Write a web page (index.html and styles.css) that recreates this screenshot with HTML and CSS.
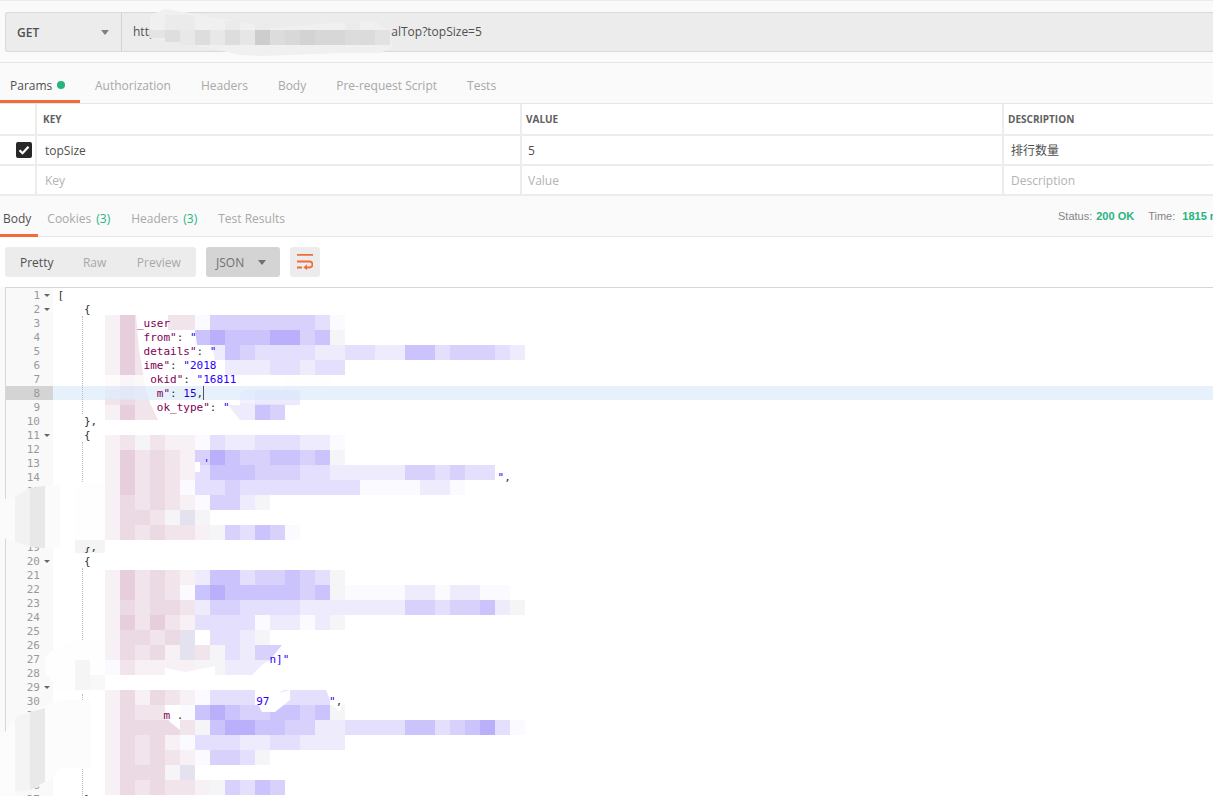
FILE: index.html
```html
<!DOCTYPE html>
<html lang="en">
<head>
<meta charset="utf-8">
<title>Postman request</title>
<link rel="stylesheet" href="styles.css">
</head>
<body>
<header class="request">
  <div class="reqbar">
    <div class="method"><span>GET</span><i class="caret"></i></div>
    <div class="url">http<span class="url-gap"></span>alTop?topSize=5</div>
  </div>
</header>
<nav class="tabs req-tabs">
  <a class="tab on">Params<i class="dot"></i></a>
  <a class="tab">Authorization</a>
  <a class="tab">Headers</a>
  <a class="tab">Body</a>
  <a class="tab">Pre-request Script</a>
  <a class="tab">Tests</a>
</nav>
<section class="params">
  <div class="prow head"><div class="c0"></div><div class="c1">KEY</div><div class="c2">VALUE</div><div class="c3">DESCRIPTION</div></div>
  <div class="prow"><div class="c0"><span class="check"><svg viewBox="0 0 16 16" width="16" height="16"><path d="M3.5 8.2l3 3 6-6.4" fill="none" stroke="#fff" stroke-width="2.2"/></svg></span></div><div class="c1">topSize</div><div class="c2">5</div><div class="c3 cjk">排行数量</div></div>
  <div class="prow ph"><div class="c0"></div><div class="c1">Key</div><div class="c2">Value</div><div class="c3">Description</div></div>
</section>
<nav class="tabs res-tabs">
  <a class="tab on">Body</a>
  <a class="tab">Cookies <b>(3)</b></a>
  <a class="tab">Headers <b>(3)</b></a>
  <a class="tab">Test Results</a>
  <div class="status">Status: <b>200 OK</b><span class="time">Time: <b>1815 ms</b></span></div>
</nav>
<div class="toolbar">
  <div class="modes"><span class="mode on">Pretty</span><span class="mode">Raw</span><span class="mode">Preview</span></div>
  <div class="lang"><span>JSON</span><i class="caret"></i></div>
  <div class="wrapbtn"><svg viewBox="0 0 16 16" width="16" height="16"><path d="M0 .9h16M0 7.500h12.500a3 3 0 0 1 0 6H8M0 13.500h5" fill="none" stroke="#f26b3a" stroke-width="1.8"/><path d="M10 10.300l-3.600 3.200 3.600 2.500z" fill="#f26b3a"/></svg></div>
</div>
<main class="editor">
<div class="guide g1"></div><div class="guide g2"></div><div class="guide g3"></div><div class="guide g4"></div>
<div class="lines">
<div class="ln"><span class="no fold">1</span><pre>[</pre></div>
<div class="ln"><span class="no fold">2</span><pre>    {</pre></div>
<div class="ln"><span class="no">3</span><pre>            <u>_user</u></pre></div>
<div class="ln"><span class="no">4</span><pre>             <u>from"</u>: <s>"</s></pre></div>
<div class="ln"><span class="no">5</span><pre>             <u>details"</u>: <s>"</s></pre></div>
<div class="ln"><span class="no">6</span><pre>             <u>ime"</u>: <s>"2018</s></pre></div>
<div class="ln"><span class="no">7</span><pre>              <u>okid"</u>: <s>"16811</s></pre></div>
<div class="ln active"><span class="no">8</span><pre>               <u>m"</u>: <em>15</em>,<i class="cursor"></i></pre></div>
<div class="ln"><span class="no">9</span><pre>               <u>ok_type"</u>: <s>"</s></pre></div>
<div class="ln"><span class="no">10</span><pre>    },</pre></div>
<div class="ln"><span class="no fold">11</span><pre>    {</pre></div>
<div class="ln"><span class="no">12</span><pre></pre></div>
<div class="ln"><span class="no">13</span><pre>                      <s>'</s></pre></div>
<div class="ln"><span class="no">14</span><pre>                                                                  <s class="nudge">"</s>,</pre></div>
<div class="ln"><span class="no">15</span><pre></pre></div>
<div class="ln"><span class="no">16</span><pre></pre></div>
<div class="ln"><span class="no">17</span><pre></pre></div>
<div class="ln"><span class="no">18</span><pre></pre></div>
<div class="ln"><span class="no">19</span><pre>    },</pre></div>
<div class="ln"><span class="no fold">20</span><pre>    {</pre></div>
<div class="ln"><span class="no">21</span><pre></pre></div>
<div class="ln"><span class="no">22</span><pre></pre></div>
<div class="ln"><span class="no">23</span><pre></pre></div>
<div class="ln"><span class="no">24</span><pre></pre></div>
<div class="ln"><span class="no">25</span><pre></pre></div>
<div class="ln"><span class="no">26</span><pre></pre></div>
<div class="ln"><span class="no">27</span><pre>                                <s>n]"</s></pre></div>
<div class="ln"><span class="no">28</span><pre></pre></div>
<div class="ln"><span class="no fold">29</span><pre></pre></div>
<div class="ln"><span class="no">30</span><pre>                              <s>97</s>         <s>"</s>,</pre></div>
<div class="ln"><span class="no">31</span><pre>                <u>m</u> .</pre></div>
<div class="ln"><span class="no">32</span><pre></pre></div>
<div class="ln"><span class="no">33</span><pre></pre></div>
<div class="ln"><span class="no">34</span><pre></pre></div>
<div class="ln"><span class="no">35</span><pre></pre></div>
<div class="ln"><span class="no">36</span><pre></pre></div>
<div class="ln"><span class="no">37</span><pre>    }</pre></div>
</div>
</main>
<div class="mosaic m1"></div>
<div class="mosaic m2"></div>
<div class="mosaic m3"></div>
<div class="mosaic m4"></div>
<svg class="canvas holes" viewBox="0 0 1213 796" width="1213" height="796">
  <path d="M136 315H168V330H195L197 345H212L216 365L224 373L234 380L250 386L233 400L228 405L240 420H158L151 405L146 390L139 350Z" fill="#fff"/>
  <path d="M98 375H345V386H98Z" fill="#fff" opacity=".72"/>
  <path d="M98 386H345V405H300L98 398Z" fill="#fff" opacity=".35"/>
  <path d="M345 375H560L300 400H345Z" fill="#fff" opacity=".8"/>
  <path d="M195 462H200V472H195Z" fill="#fff"/>
  <path d="M75 547H105V553H75Z" fill="#f4f4f4"/>
  <path d="M270 660L262 665L252 675H300V640H286Z" fill="#fff"/>
  <path d="M165 668L185 672L215 666V675H165Z" fill="#fff"/>
  <path d="M256 690H285L278 693L290 690V700L275 712L262 712L256 700Z" fill="#fff"/>
  <path d="M326 690H345L340 712L332 705Z" fill="#fff"/>
  <path d="M165 715H180V730L170 722Z" fill="#fff"/>
  <path d="M285 780H300V795H290Z" fill="#fff"/>
</svg>
<svg class="canvas smudges" viewBox="0 0 1213 796" width="1213" height="796">
  <path d="M150 15L165 9L190 13L250 24L272 28L320 24L375 21L390 32L392 48L380 53L340 53L262 56L240 55L200 46L150 38Z" fill="#f0f0f0"/>
  <g>
    <path d="M150 30h15v8h-15z" fill="#e4e4e4"/>
    <path d="M165 30h15v12h-15z" fill="#dedede"/>
    <path d="M180 30h15v15h-15z" fill="#e8e8e8"/>
    <path d="M195 30h15v15h-15z" fill="#dddddd"/>
    <path d="M210 30h15v15h-15z" fill="#e8e8e8"/>
    <path d="M225 30h15v15h-15z" fill="#dddddd"/>
    <path d="M240 30h15v15h-15z" fill="#e6e6e6"/>
    <path d="M255 30h15v15h-15z" fill="#cdcdcd"/>
    <path d="M270 30h15v15h-15z" fill="#dcdcdc"/>
    <path d="M285 30h15v15h-15z" fill="#d8d8d8"/>
    <path d="M300 30h15v15h-15z" fill="#d3d3d3"/>
    <path d="M315 30h30v15h-30z" fill="#d7d7d7"/>
    <path d="M345 30h15v15h-15z" fill="#dcdcdc"/>
    <path d="M360 30h15v15h-15z" fill="#dbdbdb"/>
    <path d="M375 30h15v15h-15z" fill="#e2e2e2"/>
    <path d="M165 15h30v15h-30z" fill="#ebebeb"/>
    <path d="M225 21h15v9h-15zM255 24h15v6h-15z" fill="#ebebeb"/>
    <path d="M345 22h15v8h-15z" fill="#ebebeb"/>
  </g>
  <path d="M0 500L15 497L30 488L60 485V548L30 547L15 542L0 537Z" fill="#fbfbfb"/>
  <path d="M15 497L30 488V547L15 542Z" fill="#f2f2f2"/>
  <path d="M30 488L45 486V548L30 547Z" fill="#e8e8e8"/>
  <path d="M75 483H105V540H75Z" fill="#fefefe"/>
  <path d="M75 540H105V547H75Z" fill="#f4f4f4"/>
  <path d="M45 658Q48 650 75 640H105V675H90V692H60L45 672Z" fill="#fefefe"/>
  <path d="M75 660H90V690H75Z" fill="#f5f5f5"/>
  <path d="M90 675H105V690H90Z" fill="#f8f8f8"/>
  <path d="M0 740L15 717L30 712L60 700H90V768H60L45 785L15 792V796H0Z" fill="#fcfcfc"/>
  <path d="M15 717L30 712V790L15 792Z" fill="#f4f4f4"/>
  <path d="M30 712L45 708V782L30 790Z" fill="#e9e9e9"/>
</svg>
<script src="mosaic.js"></script>
</body>
</html>
```
FILE: styles.css
```css
* { box-sizing: border-box; }
html, body { margin: 0; height: 796px; overflow: hidden; }
body {
  position: relative;
  display: flex;
  flex-direction: column;
  background: #fafafa;
  color: #505050;
  font: 12px "Open Sans", "Noto Sans CJK SC", sans-serif;
}
.request { height: 63px; border-top: 1px solid #ececec; border-bottom: 1px solid #e6e6e6; padding: 11px 0 0 5px; background: #fafafa; flex: none; }
.reqbar { display: flex; height: 40px; background: #ececec; border: 1px solid #d9d9d9; border-right: 0; border-radius: 3px 0 0 3px; }
.method { width: 116px; display: flex; align-items: center; justify-content: space-between; padding: 0 12px 0 11px; border-right: 1px solid #d4d4d4; font-weight: 600; color: #505050; }
.caret { display: block; width: 0; height: 0; border: 4px solid transparent; border-top: 5px solid #808080; border-bottom: 0; }
.url { flex: 1; display: flex; align-items: center; padding: 0 0 2px 11px; color: #505050; white-space: nowrap; }
.url-gap { width: 235px; }
.tabs { display: flex; align-items: stretch; flex: none; }
.req-tabs { height: 40px; }
.tab { display: flex; align-items: center; white-space: pre; color: #a8a8a8; padding: 7px 15px 0; border-bottom: 3px solid transparent; }
.tab.on { color: #505050; border-bottom-color: #f26b3a; }
.req-tabs .tab.on { width: 80px; padding: 7px 0 0 10px; }
.tab b { font-weight: 400; color: #26b47f; margin-left: 2px; }
.dot { width: 8px; height: 8px; border-radius: 50%; background: #26b47f; margin-left: 5px; }
.params { border-top: 1px solid #e6e6e6; background: #fff; flex: none; }
.prow { display: grid; grid-template-columns: 35px 485px 482px 1fr; height: 30px; border-bottom: 2px solid #ececec; color: #505050; }
.prow.head { height: 32px; font-size: 10px; font-weight: 700; color: #606060; }
.prow > div { display: flex; align-items: center; border-left: 2px solid #ececec; }
.prow > .c0 { border-left: 0; padding-left: 16px; }
.prow > .c1 { padding-left: 8px; }
.prow > .c2 { padding-left: 6px; }
.prow > .c3 { padding-left: 7px; }
.prow.head > .c1 { padding-left: 6px; }
.prow.head > .c2, .prow.head > .c3 { padding-left: 4px; }
.prow.ph { color: #b3b3b3; }
.check { display: block; width: 16px; height: 16px; background: #282828; border-radius: 2px; }
.check svg { display: block; }
.cjk { font-size: 12px; }
.res-tabs { height: 41px; border-bottom: 1px solid #e6e6e6; }
.res-tabs .tab { padding: 6px 10.500px 0; margin-bottom: -1px; }
.res-tabs .tab.on { padding: 6px 7px 0 3px; }
.res-tabs .tab:nth-child(2) { padding-left: 9px; }
.status { margin-left: auto; width: 155px; flex: none; align-self: center; margin-top: -1px; font: 11px "Liberation Sans", sans-serif; color: #858585; white-space: nowrap; overflow: hidden; display: flex; }
.status b { color: #26b47f; margin-left: 4px; }
.time { margin-left: 14px; }
.toolbar { display: flex; flex: none; gap: 10px; padding: 10px 0 10px 5px; height: 50px; background: #fff; }
.modes { display: flex; width: 191px; height: 30px; background: #ececec; border-radius: 3px; align-items: center; }
.mode { color: #a8a8a8; padding: 0 15px; }
.mode.on { color: #505050; }
.mode:nth-child(2) { padding: 0 15px 0 14.500px; }
.mode:nth-child(3) { padding-left: 15.500px; }
.lang { width: 74px; height: 30px; background: #d4d4d4; border-radius: 3px; display: flex; align-items: center; justify-content: space-between; padding: 0 14px 0 10px; color: #707070; }
.lang .caret { border-top-color: #707070; }
.wrapbtn { width: 30px; height: 30px; background: #ececec; border-radius: 3px; display: flex; align-items: center; justify-content: center; }
.editor { position: relative; flex: 1; margin-left: 5px; border-top: 1px solid #d6d6d6; border-left: 1px solid #d6d6d6; background: #fff; overflow: hidden; }
.lines { position: relative; z-index: 4; }
.ln { display: flex; height: 14px; line-height: 14px; }
.no { position: relative; width: 47px; flex: none; background: #f9f9f9; color: #999; font: 11px/14px "DejaVu Sans Mono", monospace; text-align: right; padding: 1px 13px 0 0; }
.fold::after { content: ""; position: absolute; right: 3px; top: 6px; border: 3px solid transparent; border-top: 3px solid #666; border-bottom: 0; }
.ln pre { margin: 0; padding: 1px 0 0 4.500px; flex: 1; font: 11px/14px "DejaVu Sans Mono", monospace; color: #333; }
.ln pre u { text-decoration: none; color: #7f0055; }
.ln pre s { text-decoration: none; color: #2a00ff; }
.ln pre s.nudge { margin-left: 3px; }
.ln pre em { font-style: normal; color: #1c00cf; }
.active { background: rgba(217, 233, 250, .62); }
.active .no { background: #d4d4d4; }
.cursor { display: inline-block; width: 1px; height: 14px; margin-top: -1px; background: #555; vertical-align: top; }
.guide { position: absolute; left: 76px; width: 0; border-left: 1px dotted #bbb; z-index: 5; }
.g1 { top: 28px; height: 98px; }
.g2 { top: 154px; height: 104px; }
.g3 { top: 280px; height: 116px; }
.g4 { top: 406px; height: 102px; }
.mosaic { position: absolute; left: 105px; z-index: 1; display: flex; flex-direction: column; }
.m1 { top: 315px; }
.m2 { top: 435px; }
.m3 { top: 570px; }
.m4 { top: 690px; }
.mrow { display: flex; height: 15px; }
.mrow i { width: 15px; height: 15px; flex: none; }
.x-a { background: #f7f0f4; }
.x-b { background: #f1e4eb; }
.x-c { background: #ebd9e4; }
.x-d { background: #e6cedd; }
.x-e { background: #fafaff; }
.x-f { background: #eeebfd; }
.x-g { background: #e3dffc; }
.x-h { background: #d8d1fc; }
.x-i { background: #cbc3fc; }
.x-j { background: #b9affb; }
.x-k { background: #f5f5f7; }
.x-m { background: #e4e2ef; }
.canvas { position: absolute; left: 0; top: 0; pointer-events: none; }
.holes { z-index: 2; }
.smudges { z-index: 5; }
```
FILE: mosaic.js
```js
var rows = {
  m1: ["adb.bbehhhhhhhge","adb...ijiiijjhik","adb....fihggggffggffiighhhgf","adb.....fffggfgg","acb.........eee","bcb......fggg","adbb....ffih"],
  m2: ["abkbaaegffgggffe","adbcbahjihhiihik","adbcbagiiihhhggfffffhhghgg","adbcbegghggggggggeeeeffe","acbcbaehhfk","accbkmk","acbcbbakhgihe"],
  m3: ["adbcbafiighhihgk","adbcbeijiiiiihikeeeeffeffee","acbccbfhhggggfffffffhhghhifk","adbdbaggggeffefk","accbcm.ggfk","acbcambkgfhhe","ebaaaakkfff"],
  m4: ["acacbaeggg.gggg","acbb.eijihhiihik","accccbkijjiihhffggggiighijge","acbcaegggffggfff","acbcbaehhgk","accckm","acbcbbakhgih"]
};
Object.keys(rows).forEach(function (name) {
  var box = document.querySelector("." + name);
  rows[name].forEach(function (text) {
    var row = document.createElement("div");
    row.className = "mrow";
    text.split("").forEach(function (ch) {
      var cell = document.createElement("i");
      if (ch !== ".") cell.className = "x-" + ch;
      row.appendChild(cell);
    });
    box.appendChild(row);
  });
});
```
